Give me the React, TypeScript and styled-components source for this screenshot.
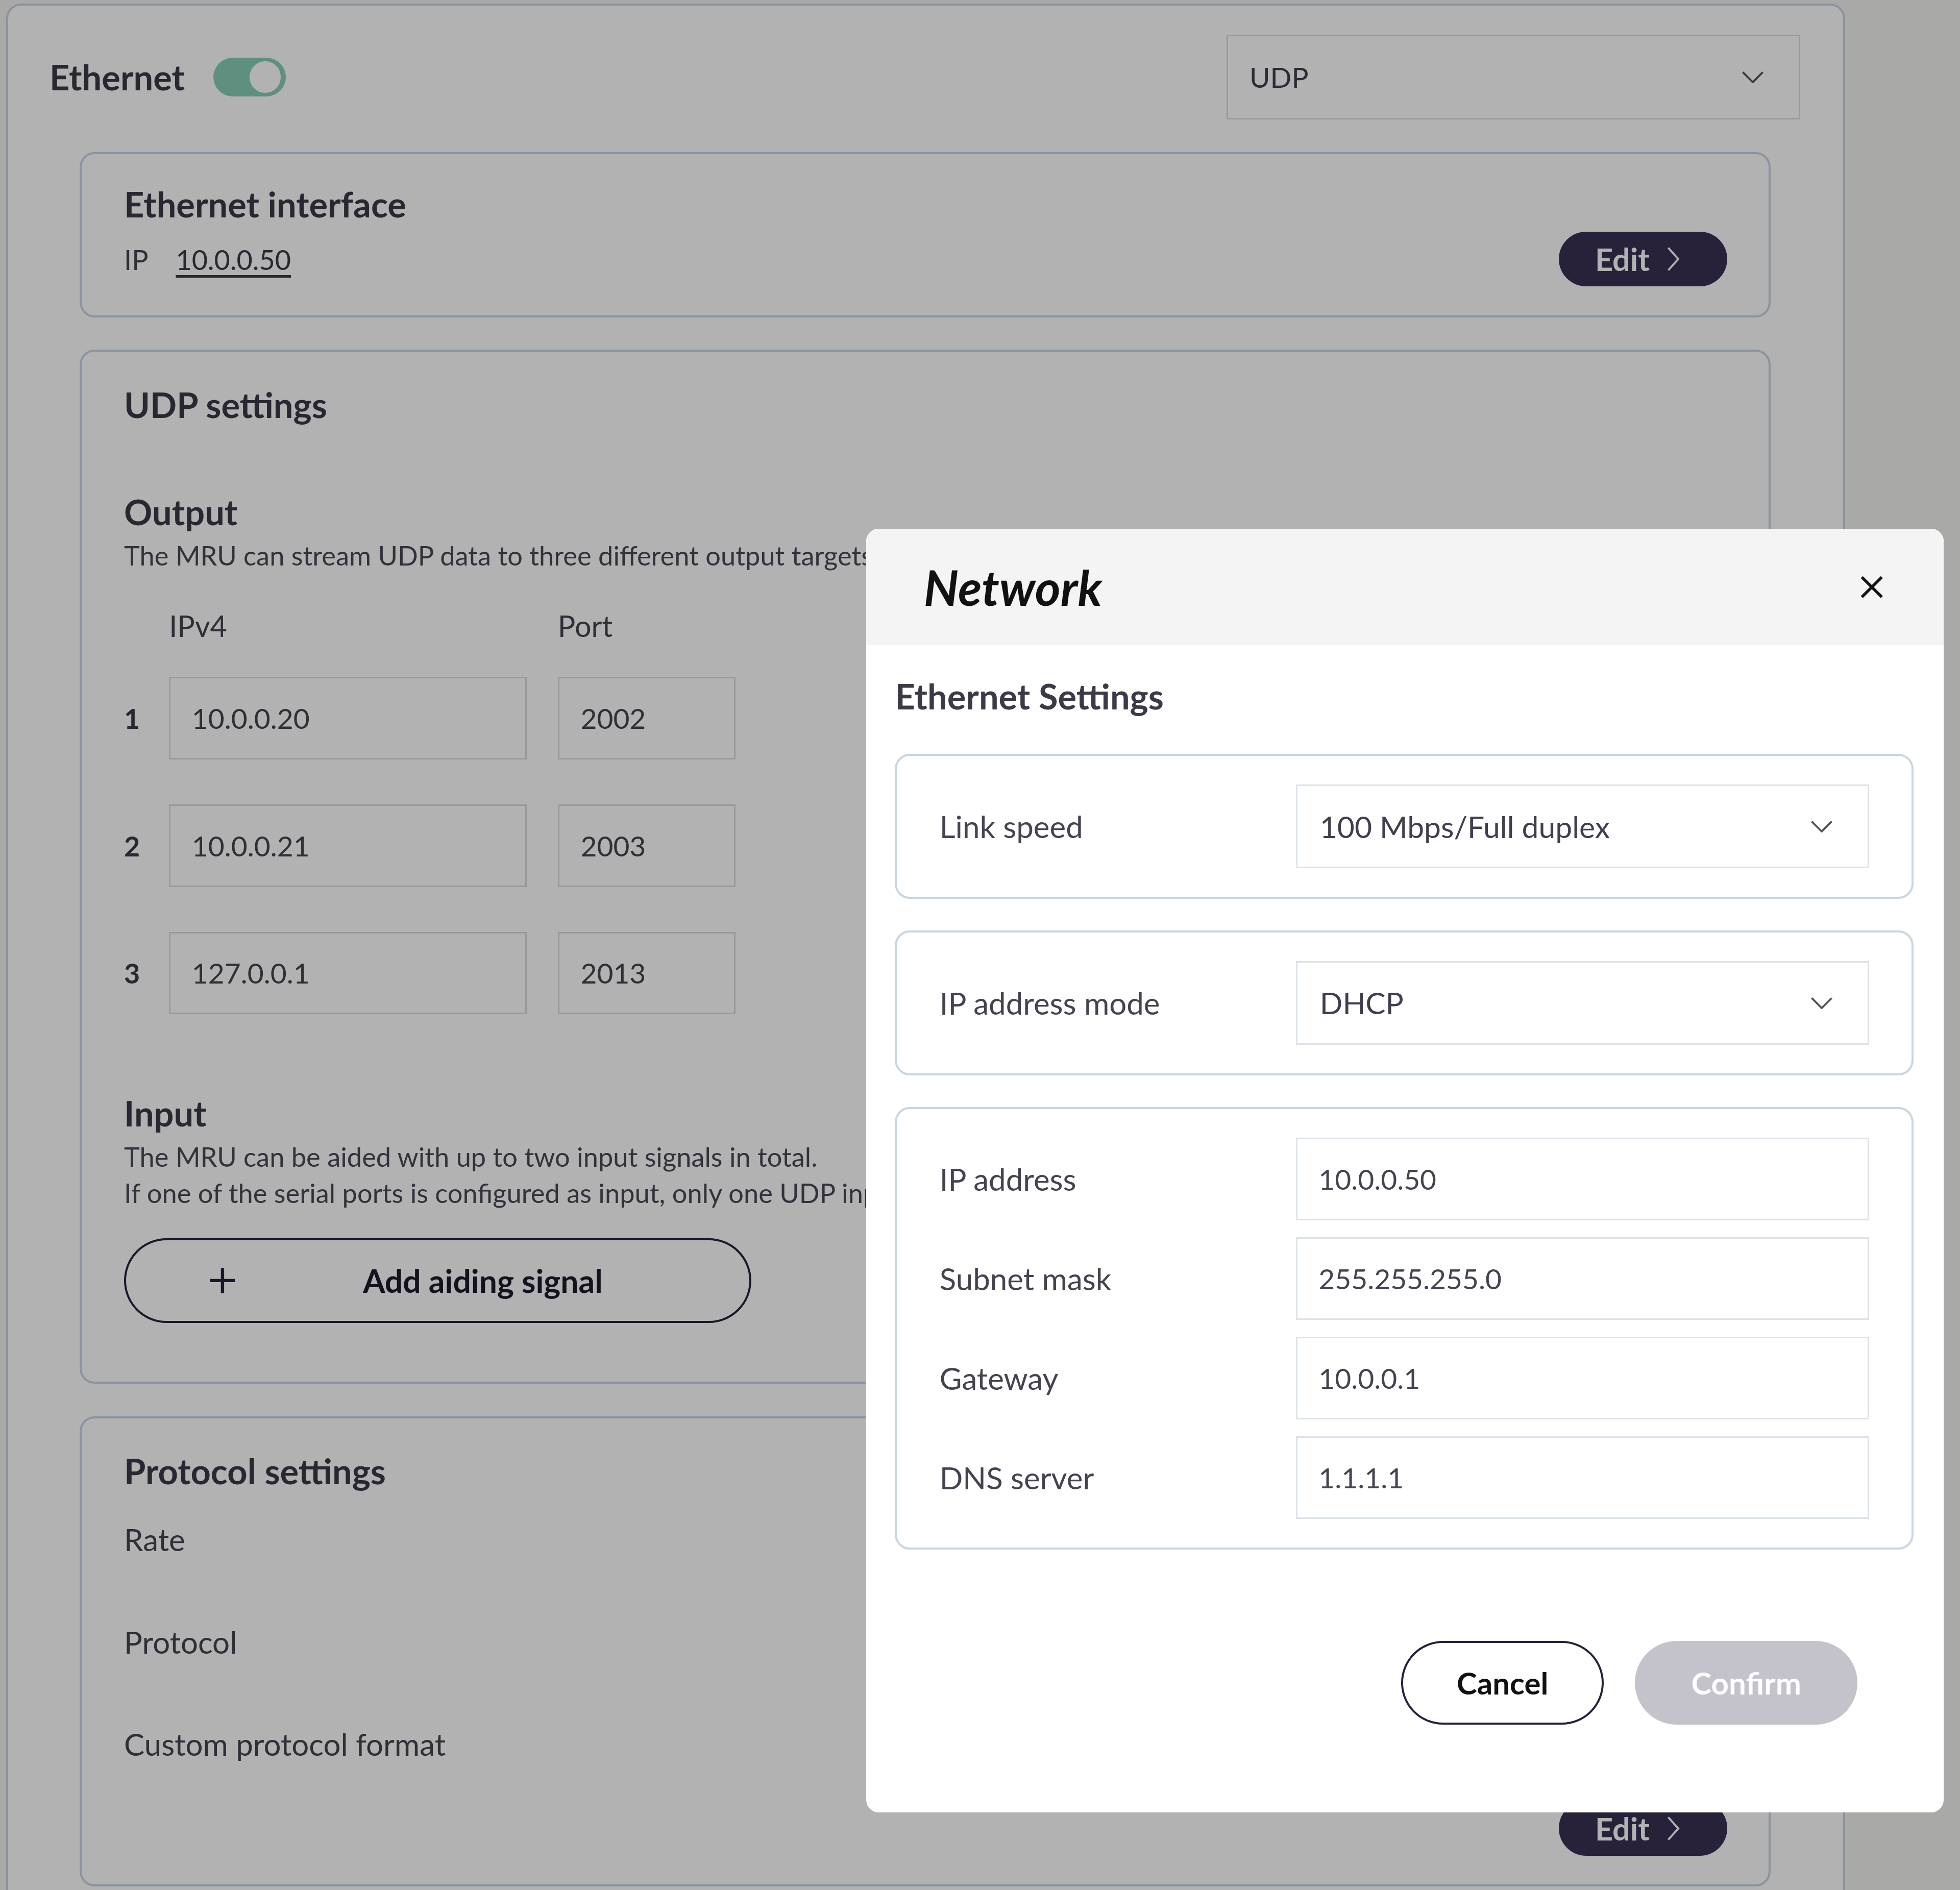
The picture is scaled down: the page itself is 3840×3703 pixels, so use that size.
import React from "react";
import styled, { createGlobalStyle } from "styled-components";

const GlobalStyle = createGlobalStyle`
  html, body {
    margin: 0;
    padding: 0;
  }
  body {
    font-family: Lato, "Noto Sans", sans-serif;
    background: #f2f2ef;
  }
  * {
    box-sizing: border-box;
  }
`;

// the screenshot was taken with a device scale of ~2.45, so everything is
// written in css px and zoomed once here
const Screen = styled.div`
  zoom: 2.449;
  position: relative;
  width: 1568px;
  height: 1512px;
  overflow: hidden;
  background: #f2f2ef;
  padding: 3px 0 0 5px;
`;

const Panel = styled.div`
  width: 1471px;
  min-height: 1600px;
  background: #fff;
  border: 2px solid #c6d3e3;
  border-radius: 12px;
  padding: 0 34px 0 33px;
`;

const TopBar = styled.div`
  display: flex;
  align-items: center;
  height: 68px;
  margin-top: 23px;
`;

const TopTitle = styled.span`
  font-size: 28px;
  font-weight: 700;
  color: #3c3a48;
`;

const Toggle = styled.div`
  position: relative;
  width: 58px;
  height: 31px;
  margin-left: 23px;
  border-radius: 16px;
  background: #88cdb7;

  &::after {
    content: "";
    position: absolute;
    top: 3px;
    right: 4px;
    width: 25px;
    height: 25px;
    border-radius: 50%;
    background: #fff;
  }
`;

const Select = styled.div<{ $w?: number; $h?: number; $border?: string; $fs?: number }>`
  display: flex;
  align-items: center;
  justify-content: space-between;
  width: ${(p) => (p.$w ? `${p.$w}px` : "100%")};
  height: ${(p) => p.$h ?? 67}px;
  padding: 0 28px 0 18px;
  border: 1.5px solid ${(p) => p.$border ?? "#dde2ea"};
  font-size: ${(p) => p.$fs ?? 24}px;
  color: #3f3f4f;
  background: #fff;
`;

const TopSelect = styled(Select)`
  margin-left: auto;
  padding-left: 17px;
`;

const Sections = styled.div`
  display: flex;
  flex-direction: column;
  gap: 26px;
  margin: 26px 24px 0;
`;

const Section = styled.section<{ $pt?: number; $pb?: number }>`
  border: 2px solid #c6d3e3;
  border-radius: 12px;
  padding: ${(p) => p.$pt ?? 25}px 33px ${(p) => p.$pb ?? 23}px 34px;
`;

const SectionTitle = styled.h2`
  margin: 0;
  font-size: 28px;
  line-height: 30px;
  font-weight: 700;
  color: #3c3a48;
`;

const SpreadRow = styled.div`
  display: flex;
  align-items: center;
  justify-content: space-between;
  margin-top: 7px;
`;

const IpLine = styled.div`
  display: flex;
  align-items: center;
  gap: 22px;
  font-size: 22px;
  color: #45434f;

  a {
    color: #3c3a48;
    text-decoration: underline;
    text-underline-offset: 4px;
  }
`;

const EditButton = styled.button`
  display: flex;
  align-items: center;
  gap: 14px;
  height: 44px;
  padding: 0 38px 0 29px;
  border: none;
  border-radius: 22px;
  background: #383153;
  color: #fff;
  font-family: inherit;
  font-size: 25px;
  font-weight: 700;
`;

const Block = styled.div<{ $mt: number }>`
  margin-top: ${(p) => p.$mt}px;
`;

const Desc = styled.p`
  margin: 5px 0 0;
  font-size: 21.4px;
  line-height: 29px;
  color: #4a4856;
  white-space: nowrap;
`;

const TargetGrid = styled.div`
  display: grid;
  grid-template-columns: 36px 311px 142px;
  align-items: center;
  row-gap: 36px;
  margin-top: 27px;
`;

const ColHead = styled.span`
  font-size: 23.5px;
  line-height: 30px;
  color: #45434f;
  margin-bottom: -10px;
`;

const RowNum = styled.span`
  font-size: 22px;
  font-weight: 700;
  color: #3c3a48;
`;

const Field = styled.div<{ $w?: number; $h?: number; $border?: string }>`
  display: flex;
  align-items: center;
  width: ${(p) => (p.$w ? `${p.$w}px` : "100%")};
  height: ${(p) => p.$h ?? 66}px;
  padding: 0 17px;
  border: 1.5px solid ${(p) => p.$border ?? "#dcdcdc"};
  font-size: 22.5px;
  color: #45434f;
  background: #fff;
`;

const OutlineButton = styled.button<{ $w: number }>`
  display: flex;
  align-items: center;
  width: ${(p) => p.$w}px;
  height: 68px;
  padding: 0 16px 0 66px;
  border: 2px solid #25213b;
  border-radius: 34px;
  background: transparent;
  font-family: inherit;
  font-size: 25.5px;
  font-weight: 700;
  color: #1c1a2a;

  span {
    flex: 1;
    text-align: center;
  }
`;

const LabelList = styled.div`
  display: flex;
  flex-direction: column;
  gap: 52px;
  margin-top: 25px;
  font-size: 24.5px;
  line-height: 30px;
  color: #45434f;
`;

const EndRow = styled.div`
  display: flex;
  justify-content: flex-end;
  margin-top: 30px;
`;

const Backdrop = styled.div`
  position: absolute;
  inset: 0;
  background: rgba(0, 0, 0, 0.3);
`;

const Modal = styled.div`
  position: absolute;
  left: 693px;
  top: 423px;
  width: 862px;
  height: 1027px;
  border-radius: 10px;
  overflow: hidden;
  background: #fff;
`;

const ModalHead = styled.header`
  display: flex;
  align-items: center;
  justify-content: space-between;
  height: 93px;
  padding: 0 48px 0 46px;
  background: #f4f4f4;
`;

const ModalTitle = styled.h1`
  margin: 0;
  font-size: 39px;
  font-style: italic;
  font-weight: 700;
  color: #111;
`;

const ModalBody = styled.div`
  padding: 26px 24px 0 23px;
`;

const SubTitle = styled.h3`
  margin: 0;
  font-size: 28px;
  line-height: 30px;
  font-weight: 700;
  color: #3c3a48;
`;

const Groups = styled.div`
  display: flex;
  flex-direction: column;
  gap: 25px;
  margin-top: 31px;
`;

const Group = styled.div`
  display: flex;
  flex-direction: column;
  gap: 13.7px;
  padding: 23px 34px;
  border: 2px solid #c9d5e3;
  border-radius: 12px;
`;

const GroupRow = styled.div`
  display: grid;
  grid-template-columns: 285px 1fr;
  align-items: center;
`;

const GroupLabel = styled.span`
  font-size: 24.5px;
  color: #45434f;
`;

const Footer = styled.div`
  display: flex;
  justify-content: flex-end;
  gap: 25px;
  margin-top: 73px;
  padding-right: 45px;
`;

const PillButton = styled.button<{ $w: number; $primary?: boolean }>`
  width: ${(p) => p.$w}px;
  height: 67px;
  border-radius: 34px;
  border: 2px solid ${(p) => (p.$primary ? "#c4c3cc" : "#25213b")};
  background: ${(p) => (p.$primary ? "#c4c3cc" : "#fff")};
  color: ${(p) => (p.$primary ? "#fff" : "#111")};
  font-family: inherit;
  font-size: 24.5px;
  font-weight: 700;
`;

const Chevron = ({ color = "#55535f" }: { color?: string }) => (
  <svg width="18" height="10" viewBox="0 0 18 10" fill="none">
    <polyline points="1 1 9 9 17 1" stroke={color} strokeWidth="1.6" />
  </svg>
);

const ChevronRight = () => (
  <svg width="10" height="20" viewBox="0 0 10 20" fill="none">
    <polyline points="1 1 9 10 1 19" stroke="#fff" strokeWidth="1.6" />
  </svg>
);

const Plus = () => (
  <svg width="22" height="22" viewBox="0 0 22 22">
    <path d="M11 1v20M1 11h20" stroke="#25213b" strokeWidth="2.6" />
  </svg>
);

const CloseIcon = () => (
  <svg width="19" height="19" viewBox="0 0 19 19">
    <path d="M1.5 1.5l16 16M17.5 1.5l-16 16" stroke="#111" strokeWidth="2.3" />
  </svg>
);

const targets = [
  { n: 1, ip: "10.0.0.20", port: "2002" },
  { n: 2, ip: "10.0.0.21", port: "2003" },
  { n: 3, ip: "127.0.0.1", port: "2013" },
];

const addressRows = [
  { label: "IP address", value: "10.0.0.50" },
  { label: "Subnet mask", value: "255.255.255.0" },
  { label: "Gateway", value: "10.0.0.1" },
  { label: "DNS server", value: "1.1.1.1" },
];

export default function App() {
  return (
    <>
      <GlobalStyle />
      <Screen>
        <Panel>
          <TopBar>
            <TopTitle>Ethernet</TopTitle>
            <Toggle />
            <TopSelect $w={459} $h={68} $border="#dcdcdc" $fs={22.5}>
              UDP
              <Chevron />
            </TopSelect>
          </TopBar>

          <Sections>
            <Section>
              <SectionTitle>Ethernet interface</SectionTitle>
              <SpreadRow>
                <IpLine>
                  IP <a>10.0.0.50</a>
                </IpLine>
                <EditButton>
                  Edit <ChevronRight />
                </EditButton>
              </SpreadRow>
            </Section>

            <Section $pt={27} $pb={47}>
              <SectionTitle>UDP settings</SectionTitle>

              <Block $mt={56}>
                <SectionTitle>Output</SectionTitle>
                <Desc>The MRU can stream UDP data to three different output targets.</Desc>
                <TargetGrid>
                  <span />
                  <ColHead>IPv4</ColHead>
                  <ColHead>Port</ColHead>
                  {targets.map((t) => (
                    <React.Fragment key={t.n}>
                      <RowNum>{t.n}</RowNum>
                      <Field $w={286}>{t.ip}</Field>
                      <Field $w={142}>{t.port}</Field>
                    </React.Fragment>
                  ))}
                </TargetGrid>
              </Block>

              <Block $mt={64}>
                <SectionTitle>Input</SectionTitle>
                <Desc>
                  The MRU can be aided with up to two input signals in total.
                  <br />
                  If one of the serial ports is configured as input, only one UDP input.
                </Desc>
                <Block $mt={22}>
                  <OutlineButton $w={502}>
                    <Plus />
                    <span>Add aiding signal</span>
                  </OutlineButton>
                </Block>
              </Block>
            </Section>

            <Section $pt={27}>
              <SectionTitle>Protocol settings</SectionTitle>
              <LabelList>
                <span>Rate</span>
                <span>Protocol</span>
                <span>Custom protocol format</span>
              </LabelList>
              <EndRow>
                <EditButton>
                  Edit <ChevronRight />
                </EditButton>
              </EndRow>
            </Section>
          </Sections>
        </Panel>

        <Backdrop />

        <Modal>
          <ModalHead>
            <ModalTitle>Network</ModalTitle>
            <CloseIcon />
          </ModalHead>
          <ModalBody>
            <SubTitle>Ethernet Settings</SubTitle>
            <Groups>
              <Group>
                <GroupRow>
                  <GroupLabel>Link speed</GroupLabel>
                  <Select>
                    100 Mbps/Full duplex
                    <Chevron />
                  </Select>
                </GroupRow>
              </Group>
              <Group>
                <GroupRow>
                  <GroupLabel>IP address mode</GroupLabel>
                  <Select>
                    DHCP
                    <Chevron />
                  </Select>
                </GroupRow>
              </Group>
              <Group>
                {addressRows.map((r) => (
                  <GroupRow key={r.label}>
                    <GroupLabel>{r.label}</GroupLabel>
                    <Field $border="#dde2ea">{r.value}</Field>
                  </GroupRow>
                ))}
              </Group>
            </Groups>
            <Footer>
              <PillButton $w={162}>Cancel</PillButton>
              <PillButton $w={178} $primary>
                Confirm
              </PillButton>
            </Footer>
          </ModalBody>
        </Modal>
      </Screen>
    </>
  );
}
